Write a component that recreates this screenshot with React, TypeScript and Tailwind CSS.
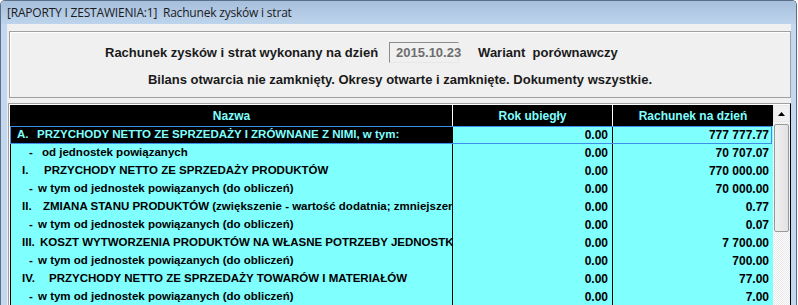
import React from "react";

type Row = {
  prefix: string;
  px: number;
  tx: number;
  text: string;
  prev: string;
  cur: string;
  selected?: boolean;
};

const WTYM = "w tym od jednostek powiązanych (do obliczeń)";

const rows: Row[] = [
  { prefix: "A.", px: 17, tx: 37, text: "PRZYCHODY NETTO ZE SPRZEDAŻY I ZRÓWNANE Z NIMI, w tym:", prev: "0.00", cur: "777 777.77", selected: true },
  { prefix: "-", px: 29, tx: 42, text: "od jednostek powiązanych", prev: "0.00", cur: "70 707.07" },
  { prefix: "I.", px: 22, tx: 44, text: "PRZYCHODY NETTO ZE SPRZEDAŻY PRODUKTÓW", prev: "0.00", cur: "770 000.00" },
  { prefix: "-", px: 29, tx: 38, text: WTYM, prev: "0.00", cur: "70 000.00" },
  { prefix: "II.", px: 22, tx: 43, text: "ZMIANA STANU PRODUKTÓW (zwiększenie - wartość dodatnia; zmniejszenie - wartość ujemna)", prev: "0.00", cur: "0.77" },
  { prefix: "-", px: 29, tx: 38, text: WTYM, prev: "0.00", cur: "0.07" },
  { prefix: "III.", px: 22, tx: 40, text: "KOSZT WYTWORZENIA PRODUKTÓW NA WŁASNE POTRZEBY JEDNOSTKI", prev: "0.00", cur: "7 700.00" },
  { prefix: "-", px: 29, tx: 38, text: WTYM, prev: "0.00", cur: "700.00" },
  { prefix: "IV.", px: 22, tx: 49, text: "PRZYCHODY NETTO ZE SPRZEDAŻY TOWARÓW I MATERIAŁÓW", prev: "0.00", cur: "77.00" },
  { prefix: "-", px: 29, tx: 38, text: WTYM, prev: "0.00", cur: "7.00" },
  { prefix: "V.", px: 22, tx: 44, text: "POZOSTAŁE", prev: "0.00", cur: "0.00" },
];

export default function App() {
  return (
    <div className="w-[798px] h-[305px] overflow-hidden bg-white">
      <div className="w-[797px] h-[330px] flex flex-col border-l border-r border-t border-[#5c7089] rounded-t-[5px] overflow-hidden">
        {/* Title bar */}
        <div className="h-[23px] shrink-0 flex items-center pl-[6px] bg-gradient-to-b from-[#a7bfdc] to-[#bdd4ec] text-[12px] text-[#1b1b1b] whitespace-pre [font-family:'Open_Sans','Noto_Sans',sans-serif] tracking-[-0.2px]">
          [RAPORTY I ZESTAWIENIA:1]  Rachunek zysków i strat
        </div>
        {/* Body */}
        <div className="flex flex-1">
          <div className="w-[6px] bg-[#c3d7ee]" />
          <div className="w-[784px] bg-[#f0f0f0] pt-[7px] [font-family:'Liberation_Sans',Arial,sans-serif] font-bold">
            {/* Group panel */}
            <div className="ml-[2px] h-[67px] border border-[#a0a0a0] shadow-[inset_1px_1px_0_#ffffff] text-[13px] text-[#1a1a1a]">
              <div className="mt-[10px] flex items-center h-[21px] pl-[95px]">
                <span>Rachunek zysków i strat wykonany na dzień</span>
                <div className="ml-[11px] w-[70px] h-[21px] border border-t-[#8c8c8c] border-l-[#8c8c8c] border-r-[#e8e8e8] border-b-[#e8e8e8] bg-[#f0f0f0] text-[#6e6e6e] flex items-center pl-[6px]">
                  2015.10.23
                </div>
                <span className="ml-[19px] whitespace-pre">Wariant  porównawczy</span>
              </div>
              <div className="mt-[7px] text-center">
                Bilans otwarcia nie zamknięty. Okresy otwarte i zamknięte. Dokumenty wszystkie.
              </div>
            </div>
            {/* Grid */}
            <div className="mt-[5px] ml-[1px] w-[783px] border-t border-l border-[#a0a0a0] border-r border-r-black">
              <div className="border-t border-l border-white">
                <div className="flex border-l border-black text-[12px]">
                  <div className="flex-1 flex flex-col">
                    {/* Header */}
                    <div className="flex h-[21px] bg-black text-[#80ffff] items-center">
                      <div className="w-[441px] text-center">Nazwa</div>
                      <div className="w-[160px] h-full border-l border-white flex items-center justify-center">Rok ubiegły</div>
                      <div className="w-[161px] h-full border-l border-white flex items-center justify-center">Rachunek na dzień</div>
                    </div>
                    {rows.map((r, i) => (
                      <div key={i} className="relative flex h-[18px] items-center bg-[#80ffff] text-black">
                        <div
                          className={
                            r.selected
                              ? "w-[441px] h-full flex items-center overflow-hidden whitespace-nowrap bg-black text-[#80ffff] text-[11.5px]"
                              : "w-[441px] h-full flex items-center overflow-hidden whitespace-nowrap text-[11.5px]"
                          }
                        >
                          <span className="shrink-0" style={{ marginLeft: r.px - 11, width: r.tx - r.px }}>
                            {r.prefix}
                          </span>
                          <span className="shrink-0">{r.text}</span>
                        </div>
                        <div className="w-[160px] h-full border-l border-black flex items-center justify-end pr-[4px]">{r.prev}</div>
                        <div className="w-[161px] h-full border-l border-black flex items-center justify-end pr-[4px]">{r.cur}</div>
                        {r.selected && (
                          <div className="absolute left-[-1px] top-0 w-[762px] h-[18px] border border-[#3d8ee8] pointer-events-none" />
                        )}
                      </div>
                    ))}
                  </div>
                  {/* Scrollbar */}
                  <div className="w-[17px] flex flex-col bg-[#f3f3f3] bg-[repeating-conic-gradient(#fdfdfd_0%_25%,#e9e9e9_0%_50%)] [background-size:2px_2px]">
                    <div className="h-[17px] bg-[#f0f0f0] border border-[#e8e8e8] flex items-center justify-center">
                      <svg width="7" height="4" viewBox="0 0 7 4">
                        <polygon points="3.5,0 7,4 0,4" fill="#000" />
                      </svg>
                    </div>
                    <div className="mt-[2px] ml-[1px] w-[15px] h-[108px] bg-gradient-to-r from-[#f0f0f0] to-[#e2e2e2] border border-[#9a9a9a] rounded-[2px]" />
                  </div>
                </div>
              </div>
            </div>
          </div>
          <div className="w-[5px] bg-[#c3d7ee]" />
        </div>
      </div>
    </div>
  );
}
